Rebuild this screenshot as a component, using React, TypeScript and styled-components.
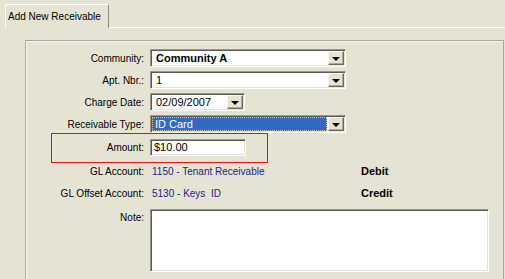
import styled, { createGlobalStyle } from "styled-components"

const GlobalStyle = createGlobalStyle`
  html, body {
    margin: 0;
    background: #e5e4d4;
    font-family: "Liberation Sans", Arial, sans-serif;
    font-size: 10px;
    color: #000;
  }
`

export default function App() {
  return (<>
    <GlobalStyle />
    <StyledWindow>
      <TabStrip>
        <Tab>Add New Receivable</Tab>
      </TabStrip>
      <TabPanel>
        <GroupBox>
          <Form>
            <Row>
              <Label>Community:</Label>
              <Combo $width={196} $bold>Community A</Combo>
            </Row>
            <Row>
              <Label>Apt. Nbr.:</Label>
              <Combo $width={196}>1</Combo>
            </Row>
            <Row>
              <Label>Charge Date:</Label>
              <Combo $width={95}>02/09/2007</Combo>
            </Row>
            <Row>
              <Label>Receivable Type:</Label>
              <Combo $width={196} $selected>ID Card</Combo>
            </Row>
            <Row $height={24} $highlight>
              <Label>Amount:</Label>
              <TextBox $width={96} $height={17}>$10.00</TextBox>
            </Row>
            <Row $top={1}>
              <Label>GL Account:</Label>
              <Account>1150 - Tenant Receivable</Account>
              <Side>Debit</Side>
            </Row>
            <Row>
              <Label>GL Offset Account:</Label>
              <Account>5130 - Keys&nbsp; ID</Account>
              <Side>Credit</Side>
            </Row>
            <NoteRow>
              <Label $pad={3}>Note:</Label>
              <TextBox $width={339} $height={63} />
            </NoteRow>
          </Form>
        </GroupBox>
      </TabPanel>
    </StyledWindow>
  </>)
}

type ComboProps = {
  $width: number
  $bold?: boolean
  $selected?: boolean
  children: React.ReactNode
}

function Combo({ $width, $bold, $selected, children }: ComboProps) {
  return (
    <Sunken $width={$width} $height={18}>
      <ComboText $bold={$bold} $selected={$selected}>{children}</ComboText>
      <DropButton><Arrow /></DropButton>
    </Sunken>
  )
}

const StyledWindow = styled.div`
  width: 505px;
  height: 279px;
  overflow: hidden;
  box-sizing: border-box;
  padding: 4px 0 0 5px;
`

const TabStrip = styled.div`
  display: flex;
`

const Tab = styled.div`
  position: relative;
  z-index: 1;
  display: flex;
  align-items: center;
  height: 22px;
  margin-bottom: -1px;
  padding: 0 7px 1px 2px;
  background: #e5e4d4;
  border: 1px solid;
  border-bottom: none;
  border-color: #fff #8d8b80 transparent #fff;
  border-radius: 2px 2px 0 0;
  font-size: 10px;
`

const TabPanel = styled.div`
  border-top: 1px solid #fff;
  padding: 12px 0 0 20px;
`

const GroupBox = styled.div`
  width: 479px;
  height: 260px;
  box-sizing: border-box;
  border: 1px solid #a9a792;
  box-shadow: inset 1px 1px 0 #f7f6ee;
`

const Form = styled.div`
  display: flex;
  flex-direction: column;
  padding-top: 6px;
`

const Row = styled.div<{ $height?: number; $top?: number; $highlight?: boolean }>`
  position: relative;
  display: flex;
  align-items: center;
  height: ${p => p.$height ?? 22}px;
  margin-top: ${p => p.$top ?? 0}px;

  ${p => p.$highlight && `
    &::after{
      content: "";
      position: absolute;
      left: 25px;
      top: -2px;
      width: 217px;
      height: 30px;
      box-sizing: border-box;
      border: 1px solid #e81414;
      pointer-events: none;
    }
  `}
`

const NoteRow = styled.div`
  display: flex;
  align-items: flex-start;
  margin-top: 5px;
`

const Label = styled.div<{ $pad?: number }>`
  width: 118px;
  margin-right: 6px;
  padding-top: ${p => p.$pad ?? 0}px;
  text-align: right;
  white-space: nowrap;
`

const Sunken = styled.div<{ $width: number; $height: number }>`
  display: flex;
  align-items: stretch;
  width: ${p => p.$width}px;
  height: ${p => p.$height}px;
  box-sizing: border-box;
  padding: 1px;
  background: #fff;
  border: 1px solid;
  border-color: #97958a #fff #fff #97958a;
  box-shadow: inset 1px 1px 0 #5c5b55, inset -1px -1px 0 #e4e3d8;
`

const TextBox = styled(Sunken)`
  align-items: center;
  padding-left: 3px;
  font-size: 11px;
`

const ComboText = styled.div<{ $bold?: boolean; $selected?: boolean }>`
  flex: 1;
  display: flex;
  align-items: center;
  box-sizing: border-box;
  padding-left: ${p => p.$selected ? 2 : 3}px;
  font-size: ${p => p.$bold ? 11 : 11}px;
  font-weight: ${p => p.$bold ? 700 : 400};
  background: ${p => p.$selected ? "#316ac5" : "transparent"};
  color: ${p => p.$selected ? "#fff" : "#000"};
  border: 1px ${p => p.$selected ? "dotted #c9c08a" : "solid transparent"};
  margin-right: 1px;
`

const DropButton = styled.div`
  display: flex;
  align-items: center;
  justify-content: center;
  width: 16px;
  box-sizing: border-box;
  background: #e5e4d4;
  border: 1px solid;
  border-color: #f6f5ee #6f6d63 #6f6d63 #f6f5ee;
  box-shadow: inset -1px -1px 0 #aaa896;
`

const Arrow = styled.div`
  width: 0;
  height: 0;
  border-left: 4px solid transparent;
  border-right: 4px solid transparent;
  border-top: 4px solid #000;
  margin-top: 1px;
`

const Account = styled.div`
  width: 209px;
  padding-left: 2px;
  color: #22228e;
  font-size: 10px;
  white-space: nowrap;
`

const Side = styled.div`
  font-size: 11px;
  font-weight: 700;
`
